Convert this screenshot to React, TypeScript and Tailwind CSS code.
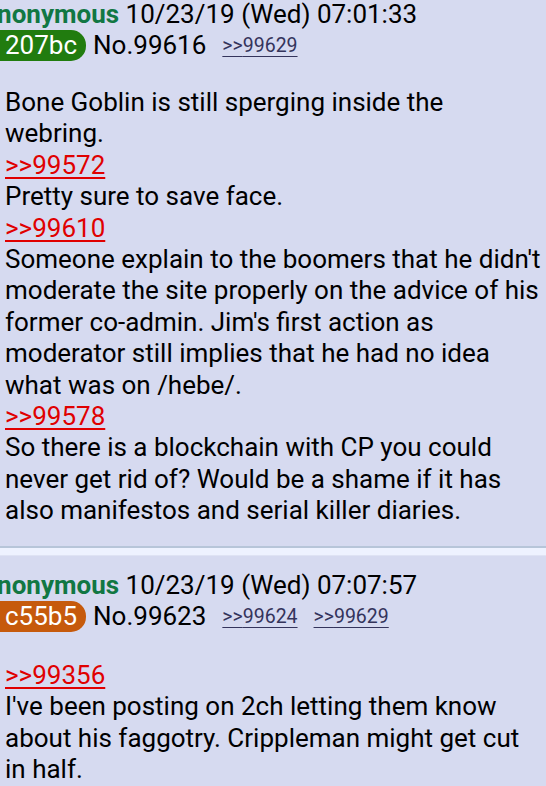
import React from "react";

const Q = ({ children }: { children: React.ReactNode }) => (
  <a className="text-[#e00000] underline decoration-[#e00000] decoration-2 underline-offset-[3px]">{children}</a>
);

const BL = ({ children }: { children: React.ReactNode }) => (
  <a className="ml-[16px] text-[19.5px] text-[#34345c] underline decoration-[#34345c] underline-offset-[4px]">
    {children}
  </a>
);

function Post({
  date,
  id,
  badge,
  no,
  backlinks,
  lines,
  bodyGap,
}: {
  date: string;
  id: string;
  badge: string;
  no: string;
  backlinks: string[];
  lines: React.ReactNode[];
  bodyGap: string;
}) {
  return (
    <div>
      <div className="-ml-[20px] h-[28px] whitespace-nowrap text-[26px] leading-[28px]">
        <span className="font-bold text-[#117743]">Anonymous</span> <span>{date}</span>
      </div>
      <div className="mt-[2px] flex h-[31px] items-center whitespace-nowrap text-[26px]">
        <span
          className="h-[31px] rounded-r-[15px] pl-[5px] pr-[9px] leading-[31px] text-white"
          style={{ backgroundColor: badge }}
        >
          {id}
        </span>
        <span className="ml-[7px]">No.{no}</span>
        {backlinks.map((b) => (
          <BL key={b}>&gt;&gt;{b}</BL>
        ))}
      </div>
      <div className={`${bodyGap} px-[5px] text-[26px] leading-[31.4px] whitespace-nowrap`}>
        {lines.map((l, i) => (
          <div key={i}>{l}</div>
        ))}
      </div>
    </div>
  );
}

export default function App() {
  return (
    <div
      className="min-h-[786px] w-[546px] overflow-hidden bg-[#d6daf0] text-black"
      style={{ fontFamily: "Roboto, 'Noto Sans', sans-serif" }}
    >
      <Post
        date="10/23/19 (Wed) 07:01:33"
        id="207bc"
        badge="#217c0f"
        no="99616"
        backlinks={["99629"]}
        bodyGap="mt-[26px]"
        lines={[
          "Bone Goblin is still sperging inside the",
          "webring.",
          <Q>&gt;&gt;99572</Q>,
          "Pretty sure to save face.",
          <Q>&gt;&gt;99610</Q>,
          "Someone explain to the boomers that he didn't",
          "moderate the site properly on the advice of his",
          "former co-admin. Jim's first action as",
          "moderator still implies that he had no idea",
          "what was on /hebe/.",
          <Q>&gt;&gt;99578</Q>,
          "So there is a blockchain with CP you could",
          "never get rid of? Would be a shame if it has",
          "also manifestos and serial killer diaries.",
        ]}
      />
      <div className="mt-[19px] h-[10px] border-t-2 border-b border-t-[#b7c5d9] border-b-[#dfe3f4] bg-[#eef2ff]" />
      <div className="pt-[15px]">
        <Post
          date="10/23/19 (Wed) 07:07:57"
          id="c55b5"
          badge="#c65a0c"
          no="99623"
          backlinks={["99624", "99629"]}
          bodyGap="mt-[28px]"
          lines={[
            <Q>&gt;&gt;99356</Q>,
            "I've been posting on 2ch letting them know",
            "about his faggotry. Crippleman might get cut",
            "in half.",
          ]}
        />
      </div>
    </div>
  );
}
